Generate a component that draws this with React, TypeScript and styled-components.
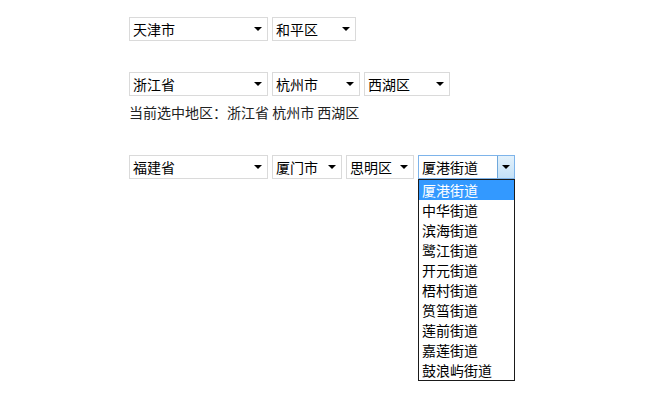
import React from "react";
import styled, { createGlobalStyle } from "styled-components";

const Global = createGlobalStyle`
  html, body { margin: 0; padding: 0; background: #ffffff; }
  body { font-family: "Noto Sans CJK SC", "Microsoft YaHei", "Noto Sans", sans-serif; }
`;

const Page = styled.div`
  width: 650px;
  height: 400px;
  box-sizing: border-box;
  padding: 17px 0 0 129px;
  font-size: 14px;
  color: #000;
`;

const Row = styled.div<{ $mt?: number }>`
  display: flex;
  gap: 4px;
  height: 24px;
  margin-top: ${(p) => p.$mt ?? 0}px;
`;

const SelectBox = styled.div<{ $w: number; $focus?: boolean }>`
  position: relative;
  box-sizing: border-box;
  width: ${(p) => p.$w}px;
  height: 24px;
  border: 1px solid ${(p) => (p.$focus ? "#7eb4ea" : "#dadada")};
  background: #fff;
  display: flex;
  align-items: center;
  padding-left: 3px;
  line-height: 22px;
  color: #000;
`;

const Label = styled.span`
  flex: 1;
  white-space: nowrap;
`;

const Arrow = styled.span`
  width: 18px;
  height: 22px;
  display: flex;
  align-items: center;
  justify-content: center;
  &::after {
    content: "";
    width: 0;
    height: 0;
    border-left: 4px solid transparent;
    border-right: 4px solid transparent;
    border-top: 4px solid #000;
  }
`;

const ArrowButton = styled.span`
  box-sizing: border-box;
  width: 17px;
  height: 22px;
  display: flex;
  align-items: center;
  justify-content: center;
  border-left: 1px solid #6fa8dc;
  background: linear-gradient(#e3f1fb, #c4e1f7);
  &::after {
    content: "";
    width: 0;
    height: 0;
    border-left: 4px solid transparent;
    border-right: 4px solid transparent;
    border-top: 4px solid #000;
  }
`;

const Info = styled.div`
  margin-top: 6px;
  line-height: 20px;
  height: 20px;
  color: #222;
  white-space: pre;
`;

const Menu = styled.ul`
  position: absolute;
  top: 23px;
  left: -1px;
  width: 97px;
  box-sizing: border-box;
  margin: 0;
  padding: 0;
  list-style: none;
  border: 1px solid #1a1a1a;
  background: #fff;
  z-index: 2;
`;

const Item = styled.li<{ $active?: boolean }>`
  height: 20px;
  line-height: 20px;
  padding-left: 3px;
  background: ${(p) => (p.$active ? "#3399ff" : "#fff")};
  color: ${(p) => (p.$active ? "#fff" : "#000")};
  white-space: nowrap;
`;

const Select = ({ w, label }: { w: number; label: string }) => (
  <SelectBox $w={w}>
    <Label>{label}</Label>
    <Arrow />
  </SelectBox>
);

const streets = [
  "厦港街道",
  "中华街道",
  "滨海街道",
  "鹭江街道",
  "开元街道",
  "梧村街道",
  "筼筜街道",
  "莲前街道",
  "嘉莲街道",
  "鼓浪屿街道",
];

export default function App() {
  return (
    <Page>
      <Global />
      <Row>
        <Select w={139} label="天津市" />
        <Select w={84} label="和平区" />
      </Row>
      <Row $mt={31}>
        <Select w={139} label="浙江省" />
        <Select w={88} label="杭州市" />
        <Select w={86} label="西湖区" />
      </Row>
      <Info>当前选中地区：浙江省 杭州市 西湖区</Info>
      <Row $mt={33}>
        <Select w={139} label="福建省" />
        <Select w={70} label="厦门市" />
        <Select w={68} label="思明区" />
        <SelectBox $w={97} $focus>
          <Label>厦港街道</Label>
          <ArrowButton />
          <Menu>
            {streets.map((s, i) => (
              <Item key={s} $active={i === 0}>
                {s}
              </Item>
            ))}
          </Menu>
        </SelectBox>
      </Row>
    </Page>
  );
}
